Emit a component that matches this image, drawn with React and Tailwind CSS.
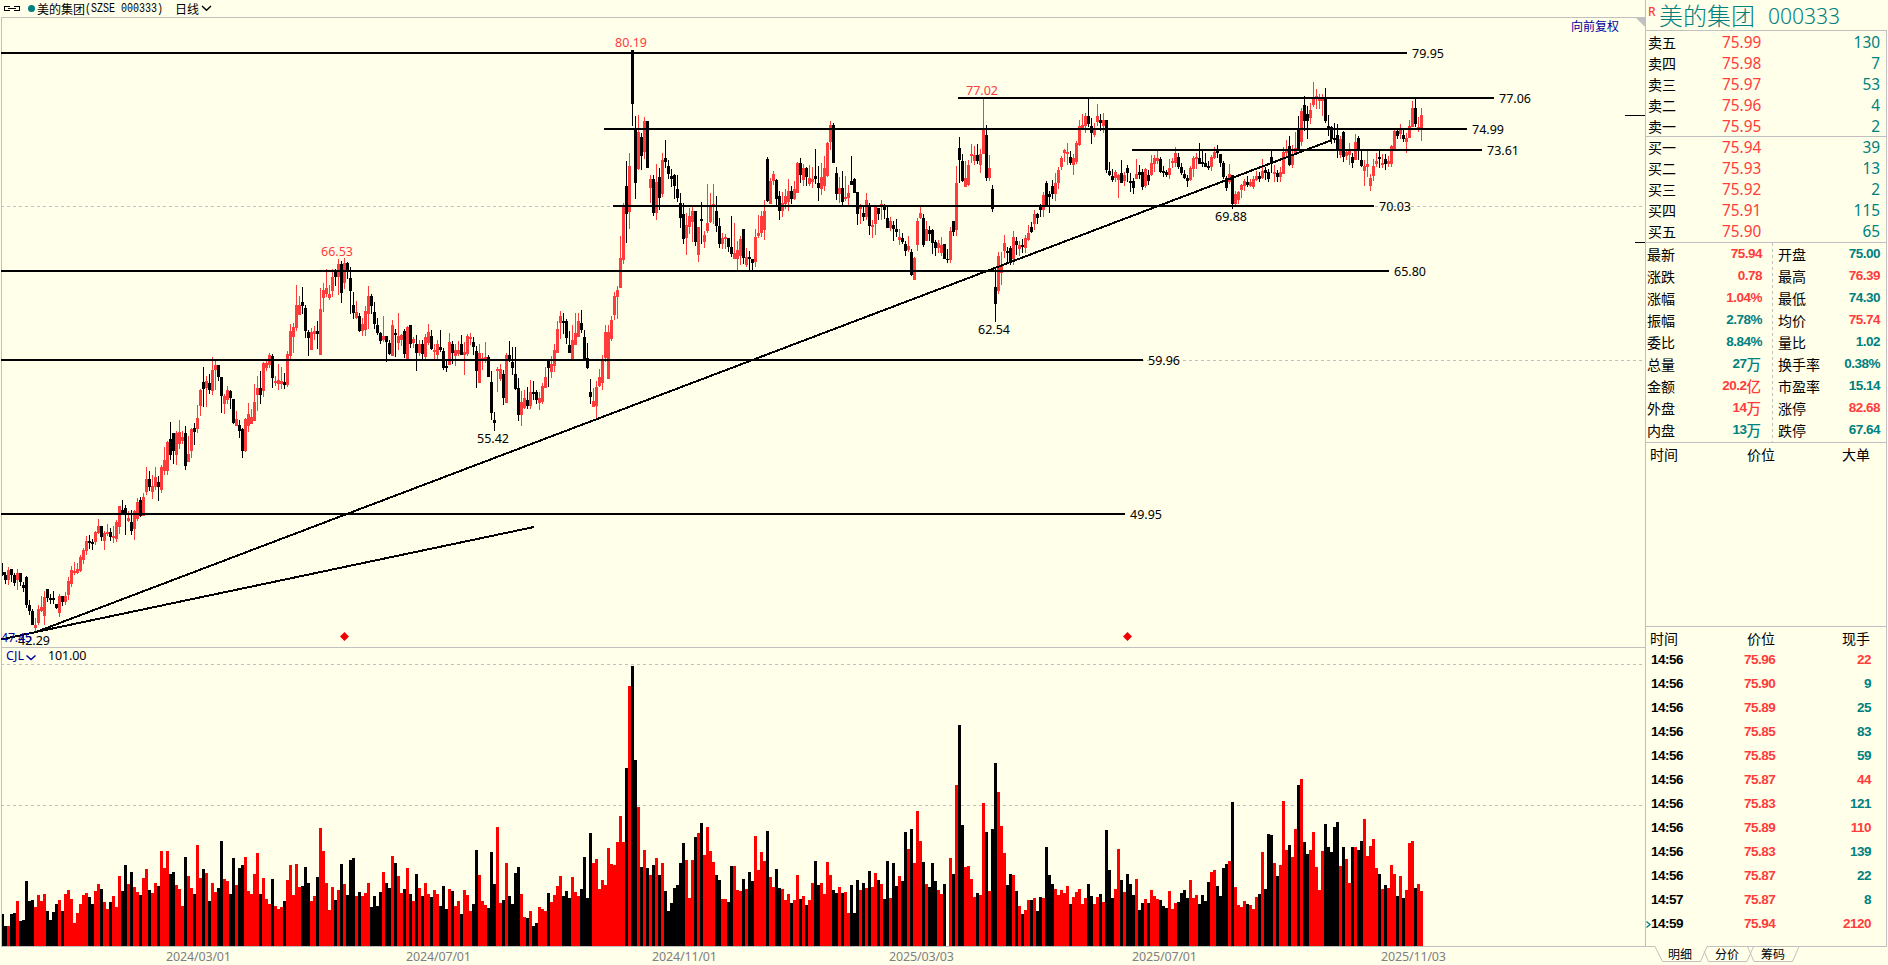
// One entry per trading day. Prices are "high bodyTop bodyBottom low" in chart
// sub-units (3 per pixel), volumes are colour + bar top in the same units.
const PRICES = `
1690 1717 1726 1728|1717 1726 1740 1752|1701 1710 1739 1755|1707 1707 1726 1745|1720 1725 1748 1757|1707 1719 1740 1770|1719 1719 1746 1758|1746 1755 1764 1776
1728 1731 1815 1824|1800 1815 1833 1845|1827 1833 1875 1875|1854 1875 1884 1896|1815 1827 1869 1875|1788 1821 1833 1836|1773 1791 1847 1875|1768 1768 1794 1806
1782 1794 1800 1812|1773 1795 1800 1812|1812 1812 1824 1827|1782 1788 1839 1850|1789 1789 1806 1818|1776 1788 1806 1815|1731 1743 1785 1800|1698 1710 1752 1761
1686 1713 1719 1725|1689 1707 1719 1722|1665 1671 1713 1716|1644 1650 1680 1692|1608 1623 1653 1665|1605 1623 1628 1647|1617 1627 1633 1650|1593 1596 1627 1635
1557 1578 1599 1602|1578 1578 1611 1623|1593 1599 1623 1650|1572 1596 1602 1608|1584 1596 1611 1623|1578 1608 1615 1629|1560 1566 1617 1626|1518 1518 1581 1602
1500 1530 1540 1545|1515 1524 1540 1605|1533 1554 1563 1566|1530 1566 1593 1605|1530 1533 1587 1620|1494 1506 1557 1563|1491 1500 1548 1551|1479 1491 1548 1548
1401 1437 1476 1485|1413 1437 1461 1473|1425 1458 1476 1497|1401 1431 1461 1470|1428 1446 1461 1503|1395 1401 1470 1479|1341 1380 1413 1425|1323 1326 1413 1425
1266 1317 1365 1380|1299 1299 1353 1392|1293 1299 1365 1395|1260 1296 1332 1347|1293 1311 1323 1332|1278 1299 1398 1410|1308 1362 1386 1386|1284 1287 1353 1374
1269 1284 1296 1335|1215 1254 1287 1299|1167 1170 1218 1248|1101 1146 1167 1221|1128 1143 1164 1221|1122 1149 1170 1182|1071 1110 1173 1185|1080 1095 1110 1170
1095 1095 1131 1143|1131 1131 1188 1239|1182 1188 1212 1242|1158 1170 1200 1212|1170 1173 1194 1227|1197 1197 1269 1272|1233 1257 1278 1278|1260 1275 1293 1314
1284 1287 1353 1374|1254 1257 1353 1356|1209 1242 1278 1296|1227 1251 1272 1272|1152 1206 1263 1263|1128 1164 1185 1233|1113 1164 1185 1212|1086 1089 1173 1191
1083 1089 1104 1113|1059 1065 1095 1104|1062 1068 1134 1164|1128 1143 1149 1158|1092 1140 1152 1170|1101 1143 1152 1167|1119 1146 1155 1167|1053 1062 1155 1161
972 993 1068 1077|969 981 1011 1059|855 915 984 993|888 915 945 945|861 906 918 942|915 924 993 1014|990 996 1014 1068|984 996 1050 1050
978 993 1002 1020|963 993 1002 1047|864 927 1064 1064|849 870 894 936|807 864 882 891|855 882 894 900|807 831 873 891|807 813 831 858
777 792 831 885|783 792 879 909|774 789 849 867|786 789 810 837|801 834 873 942|876 915 939 957|903 936 954 957|939 948 993 996
954 972 993 1008|918 933 990 1008|858 888 942 987|882 888 918 942|906 936 972 987|954 975 999 1005|996 999 1023 1032|948 1008 1020 1026
1008 1008 1026 1086|1020 1029 1062 1065|960 975 1068 1068|987 999 1005 1071|939 1008 1029 1050|1002 1005 1020 1038|987 993 1062 1074|978 981 1077 1077
975 975 1032 1044|1011 1017 1029 1044|1005 1032 1059 1113|1020 1032 1059 1068|1020 1032 1062 1077|1002 1011 1071 1080|972 996 1029 1035|990 1008 1047 1050
1032 1050 1056 1077|1020 1032 1065 1077|990 1041 1050 1056|1044 1053 1104 1110|1080 1098 1104 1116|999 1026 1095 1095|1023 1032 1059 1092|1032 1050 1068 1098
1023 1050 1062 1068|1005 1032 1065 1065|1026 1056 1065 1125|1002 1008 1062 1068|999 1011 1017 1035|1011 1026 1041 1065|1038 1053 1113 1164|1032 1059 1149 1149
1059 1074 1083 1110|1026 1071 1080 1089|1065 1071 1131 1131|1113 1146 1239 1260|1236 1260 1269 1293|1101 1107 1113 1176|1092 1107 1137 1143|1110 1122 1194 1215
1059 1065 1209 1209|1023 1065 1083 1086|1041 1086 1104 1125|1041 1122 1167 1170|1134 1164 1245 1263|1173 1206 1245 1278|1170 1194 1224 1227|1161 1200 1218 1227
1140 1176 1218 1227|1143 1176 1182 1200|1170 1176 1200 1212|1176 1194 1209 1230|1149 1158 1206 1212|1101 1131 1164 1164|1080 1080 1104 1161|1068 1092 1116 1134
1032 1050 1098 1116|963 987 1059 1059|933 948 969 1017|939 963 969 1002|957 963 1014 1032|993 1035 1059 1059|975 1020 1080 1083|939 999 1035 1035
939 963 1011 1011|930 969 990 999|990 1011 1080 1080|1029 1074 1104 1107|1137 1176 1191 1212|1164 1203 1221 1221|1143 1161 1218 1254|1107 1131 1158 1161
1065 1080 1149 1170|975 996 1074 1086|975 996 1137 1137|948 960 1017 1023|876 888 945 960|858 870 891 957|708 774 864 864|609 621 780 792
483 558 642 729|459 498 636 687|150 150 312 378|348 387 549 597|345 396 507 510|399 411 468 510|351 363 456 477|363 363 504 504
525 537 564 609|525 537 639 648|492 546 639 660|504 531 594 630|459 480 582 591|420 474 486 504|480 498 522 537|507 528 537 561
522 525 558 597|525 567 594 606|579 609 654 684|609 642 717 732|639 675 714 765|624 648 681 702|618 633 666 726|633 633 726 738
681 681 765 786|606 657 663 732|693 705 726 744|552 669 693 699|579 618 666 669|552 612 618 672|588 633 678 696|654 678 732 744
699 714 732 747|702 711 717 747|714 714 741 756|648 741 762 771|669 759 777 777|723 750 777 810|708 717 768 795|687 687 774 792
744 771 795 801|753 771 777 810|777 777 789 810|687 711 786 801|645 699 708 714|633 648 699 711|600 633 690 720|471 477 603 606
534 543 612 612|513 522 543 555|537 540 597 615|573 588 633 660|576 609 633 651|567 588 612 627|537 573 606 633|558 573 597 612
543 567 597 600|486 489 579 579|474 489 525 549|492 504 540 558|501 504 531 558|495 534 552 558|501 537 546 564|447 528 537 552
498 549 564 603|489 531 567 585|468 504 558 573|426 429 528 531|363 375 426 450|369 375 489 489|501 519 582 600|531 564 582 609
513 564 606 615|528 591 597 603|555 579 594 615|468 543 555 555|534 537 579 579|576 576 642 675|612 621 627 672|615 639 651 663
579 600 651 660|609 618 678 705|660 675 681 714|618 621 672 705|624 624 642 660|600 612 621 660|612 615 630 657|618 654 684 684
651 663 684 693|663 675 687 723|657 687 696 711|687 711 720 735|699 714 726 732|723 732 753 768|708 738 750 756|747 756 825 828
771 774 840 840|654 663 735 753|621 639 654 657|642 654 735 741|663 687 723 723|678 690 702 723|687 690 729 762|720 726 744 768
720 729 744 759|711 735 759 768|732 732 777 777|747 777 780 789|681 693 780 789|663 663 696 708|498 549 690 708|411 444 480 549
462 483 543 546|483 534 561 561|480 495 555 558|432 462 468 489|438 465 483 495|432 465 483 492|447 462 495 519|297 387 462 462
375 405 534 543|465 504 534 543|555 567 627 636|804 861 912 966|756 768 873 882|756 798 819 855|705 729 753 774|741 753 759 792
738 744 789 795|693 711 777 795|711 723 735 765|723 735 747 768|717 735 741 759|705 714 744 759|675 699 720 723|666 681 696 699
630 642 672 690|639 642 654 672|612 618 630 651|576 585 630 651|543 549 618 618|573 582 591 639|540 558 582 597|519 549 582 603
501 510 549 567|468 474 501 510|447 450 459 486|429 456 462 495|453 471 489 495|462 474 495 525|423 429 486 492|360 378 435 438
342 375 387 390|339 348 378 399|297 348 372 381|354 378 399 432|369 390 405 411|312 348 366 378|342 360 369 393|339 360 378 399
360 360 510 519|486 513 525 528|507 528 540 546|510 516 534 546|522 525 540 594|480 519 549 549|516 525 543 558|495 504 519 546
519 543 549 576|534 543 564 582|477 522 537 537|495 516 525 537|507 516 561 570|504 507 558 564|510 525 543 555|465 489 525 528
465 474 492 516|450 474 483 492|471 477 516 519|498 513 519 531|510 516 525 531|477 504 525 537|474 483 489 504|441 459 489 501
459 471 501 507|489 501 519 525|510 522 534 537|525 534 543 561|498 504 540 543|468 474 507 531|459 471 477 507|429 474 492 492
453 486 492 501|459 489 501 501|483 498 504 510|465 471 501 513|441 456 474 477|435 450 459 474|462 462 489 501|483 489 531 537
528 534 564 573|492 522 546 552|525 525 612 627|573 582 612 618|573 576 600 612|552 555 570 594|537 543 558 573|528 546 555 561
537 546 558 561|528 537 561 567|513 528 540 543|516 528 537 546|477 513 534 537|501 510 519 540|507 516 537 546|447 471 489 519
495 516 522 546|510 519 531 546|501 516 531 546|441 456 522 522|420 447 459 468|408 438 495 498|435 462 495 504|396 444 459 465
348 387 447 453|324 333 426 438|288 315 363 393|318 342 363 417|309 330 354 372|246 297 315 321|267 288 297 327|282 294 303 327
282 297 303 348|264 294 363 369|345 378 390 408|378 381 417 432|369 414 420 429|372 405 450 474|408 417 465 474|393 396 471 486
447 456 468 480|429 447 465 495|459 471 489 504|402 426 480 480|408 414 453 480|450 480 498 501|480 498 513 558|450 492 501 531
522 534 558 573|477 498 528 543|459 483 492 501|453 471 477 504|462 489 495 504|462 477 492 510|468 483 492 501|435 438 492 501
390 393 447 450|387 393 408 417|372 390 402 417|390 405 417 426|399 414 426 459|360 378 414 414|303 324 381 381|297 324 372 381
351 381 390 396|324 345 384 423
`.trim().split(/[|\n]/).map((row) => row.split(' ').map((v) => Math.round(v / 3)));

const VOLUMES = `
k822 k858 r858 k822 k819 r783 k843 k840 k723 k783 k780 r801 r765 r783 r762 k813 k840 k816 k792 r780
k813 r762 r750 r777 r849 r819 r792 r765 r759 k771 k792 r753 r732 k747 r786 r807 k786 r768 r801 r708
k753 k675 r732 k696 r741 r756 k765 r714 r687 k750 r759 r729 k738 r633 r684 r633 k702 k696 r735 r747
r798 k651 r708 r744 k762 r615 r714 k687 r699 k783 r729 r756 k744 k603 r717 r723 k762 k654 r735 k684
k675 r651 r753 r762 r702 r639 k762 r714 r777 r792 k717 r798 r807 r801 k783 r720 r675 r765 r672 r741
k738 k681 k729 r783 r768 k711 r564 r633 r729 r810 r741 k780 r750 k672 r732 k765 k660 k654 r768 k756
r768 r759 r729 k801 k768 k798 k756 r696 k729 k744 r648 k669 r708 r759 k747 r684 k762 r783 k702 r744
k768 r729 r762 k771 r750 r762 k798 k738 k807 r747 k753 r798 r783 k822 r750 r765 r813 k792 k630 r705
r783 r795 k804 k636 k732 r561 r789 k780 r669 k768 k792 k699 k681 r762 r831 k834 r813 k858 k849 r801
r807 r813 k759 r786 r765 r738 r708 k768 k753 k774 r711 r756 r768 k747 k651 k774 k579 r669 r657 r747
r720 r735 r624 r672 r675 r606 r528 r606 k384 r138 k78 k360 r501 k681 r630 k684 r705 k675 r654 k705
r669 k753 k813 k789 k744 k735 k669 k609 r660 r774 r660 k591 r579 k549 r645 r561 r633 r666 k705 k720
r777 r777 k786 k678 r678 r750 r753 k717 r747 k696 k723 r588 r690 r636 r663 k573 r711 r741 k687 k744
r747 r780 r762 k789 r780 r705 k777 r768 k795 r780 r729 k663 k735 r729 r762 r666 r705 k750 k759 r741
k759 r756 r819 k735 k819 k720 r750 k729 r744 k693 r741 r699 k720 r732 k777 k663 r774 k669 k738 r708
k723 k576 r627 k567 r669 r513 r603 k666 r732 k741 k669 k723 r750 r762 k732 k918 r654 k702 r435 k255
k555 r681 r678 r717 r771 k759 r765 r489 k576 r753 k567 k369 r456 r558 r639 k735 k702 r705 k753 r798
k822 r810 r780 k780 r774 k813 k771 r774 k621 k705 k732 r747 r765 r750 r759 r738 k792 r771 r756 r747
r792 r774 k732 k768 r792 r771 k762 r786 k570 k690 k774 r747 r627 k720 r756 k702 k732 k765 r717 k810
k789 r777 k789 r750 r768 r777 k780 k798 k804 r753 r807 r789 k786 k759 k750 k774 r720 r774 r765 k792
k765 k783 k726 r696 r690 k738 k768 k684 k672 r663 k486 r741 r795 r801 r783 k792 r795 r807 r771 k762
r636 k747 k582 k585 r669 k708 r675 r483 r630 k615 r651 r567 k435 r417 k606 k642 r630 r576 r681 r750
r633 k552 k621 k636 k561 k546 r678 k621 r657 r729 k621 r621 k630 k603 r537 r648 r618 r597 r684 k702
r747 k735 r744 r675 r702 k768 r708 k774 r750 r609 r603 k744 r732 r753
`.trim().split(/\s+/).map((v) => ({ up: v[0] === 'r', y: 640 + v.slice(1) / 3 }));

const LEVELS = [
  { price: '79.95', y: 53, from: 1, to: 1407 },
  { price: '77.06', y: 98, from: 958, to: 1494 },
  { price: '74.99', y: 129, from: 604, to: 1467 },
  { price: '73.61', y: 150, from: 1132, to: 1482 },
  { price: '70.03', y: 206, from: 613, to: 1374 },
  { price: '65.80', y: 271, from: 1, to: 1389 },
  { price: '59.96', y: 360, from: 1, to: 1143 },
  { price: '49.95', y: 514, from: 1, to: 1125 },
];

const MARKS = [
  { text: '66.53', x: 321, y: 256, high: true },
  { text: '80.19', x: 615, y: 47, high: true },
  { text: '77.02', x: 966, y: 95, high: true },
  { text: '55.42', x: 477, y: 443 },
  { text: '62.54', x: 978, y: 334 },
  { text: '69.88', x: 1215, y: 221 },
  { text: '42.29', x: 18, y: 645 },
];

const DATES = [
  ['2024/03/01', 166],
  ['2024/07/01', 406],
  ['2024/11/01', 652],
  ['2025/03/03', 889],
  ['2025/07/01', 1132],
  ['2025/11/03', 1381],
];

const ASKS = [
  ['卖五', '75.99', '130'],
  ['卖四', '75.98', '7'],
  ['卖三', '75.97', '53'],
  ['卖二', '75.96', '4'],
  ['卖一', '75.95', '2'],
];

const BIDS = [
  ['买一', '75.94', '39'],
  ['买二', '75.93', '13'],
  ['买三', '75.92', '2'],
  ['买四', '75.91', '115'],
  ['买五', '75.90', '65'],
];

const UP = 'text-[#ff3c3c]';
const DOWN = 'text-[#008080]';

const STATS_LEFT = [
  ['最新', '75.94', '', UP],
  ['涨跌', '0.78', '', UP],
  ['涨幅', '1.04%', '', UP],
  ['振幅', '2.78%', '', DOWN],
  ['委比', '8.84%', '', DOWN],
  ['总量', '27', '万', DOWN],
  ['金额', '20.2', '亿', UP],
  ['外盘', '14', '万', UP],
  ['内盘', '13', '万', DOWN],
];

const STATS_RIGHT = [
  ['开盘', '75.00', '', DOWN],
  ['最高', '76.39', '', UP],
  ['最低', '74.30', '', DOWN],
  ['均价', '75.74', '', UP],
  ['量比', '1.02', '', DOWN],
  ['换手率', '0.38%', '', DOWN],
  ['市盈率', '15.14', '', DOWN],
  ['涨停', '82.68', '', UP],
  ['跌停', '67.64', '', DOWN],
];

const TICKS = [
  ['14:56', '75.96', '22', UP],
  ['14:56', '75.90', '9', DOWN],
  ['14:56', '75.89', '25', DOWN],
  ['14:56', '75.85', '83', DOWN],
  ['14:56', '75.85', '59', DOWN],
  ['14:56', '75.87', '44', UP],
  ['14:56', '75.83', '121', DOWN],
  ['14:56', '75.89', '110', UP],
  ['14:56', '75.83', '139', DOWN],
  ['14:56', '75.87', '22', DOWN],
  ['14:57', '75.87', '8', DOWN],
  ['14:59', '75.94', '2120', UP],
];

const CHART_FONT = "font-['Noto_Sans','Noto_Sans_CJK_SC',sans-serif] text-[12.5px]";
const CJK_FONT = "font-['Noto_Sans_CJK_SC',sans-serif]";
const BOLD_FONT = "font-['Liberation_Sans','Noto_Sans_CJK_SC',sans-serif] font-bold text-[13.5px] tracking-[-0.5px]";

function GridLine({ y }) {
  return <path d={`M1 ${y + 0.5}H1643`} stroke="#c0c0c0" strokeDasharray="3 3" />;
}

function ChartHeader() {
  return (
    <header className="flex h-[17px] items-center pl-1 text-black">
      <svg width="16" height="6" viewBox="0 0 16 6" fill="none" stroke="#000" shapeRendering="crispEdges">
        <path d="M6 .5H.5v4H6M10 .5h5.5v4H10M4 2.5h8" />
      </svg>
      <span className="ml-2 size-[7px] rounded-full bg-[#008080]" />
      <span className={`${CJK_FONT} ml-[2px] text-[12px] leading-[17px]`}>美的集团</span>
      <span className="inline-block origin-center scale-y-120 whitespace-pre font-['Liberation_Mono',monospace] text-[10px] leading-[17px]">
        (SZSE 000333)
      </span>
      <span className={`${CJK_FONT} ml-3 text-[12px] leading-[17px]`}>日线</span>
      <svg className="ml-[2px]" width="11" height="7" viewBox="0 0 11 7" fill="none" stroke="#000" strokeWidth="1.4">
        <path d="M1 1l4.5 4.3L10 1" />
      </svg>
    </header>
  );
}

function PriceChart() {
  return (
    <svg className={`${CHART_FONT} block`} width="1645" height="630" viewBox="0 17 1645 630">
      <path d="M1 17.5H1645M1.5 17V647" stroke="#c0c0c0" />
      <GridLine y={206} />
      <GridLine y={360} />

      <g shapeRendering="crispEdges">
        {PRICES.map(([high, top, bottom, low], i) => {
          const x = 1 + i * 3;
          return (
            <g key={i} fill={VOLUMES[i].up ? '#ff3c3c' : '#000'}>
              <rect x={x + 1} y={high} width="1" height={low - high} />
              <rect x={Math.max(x, 2)} y={top} width="3" height={Math.max(bottom - top, 1)} />
            </g>
          );
        })}
      </g>

      <g stroke="#000" strokeWidth="2" shapeRendering="crispEdges">
        {LEVELS.map(({ price, y, from, to }) => (
          <path key={price} d={`M${from} ${y}H${to}`} />
        ))}
        <path d="M36 632L1332 140" />
        <path d="M1 639.5L36 632L534 527" fill="none" />
      </g>

      {LEVELS.map(({ price, y, to }) => (
        <text key={price} x={to + 5} y={y + 5} textLength="32">{price}</text>
      ))}
      {MARKS.map(({ text, x, y, high }) => (
        <text key={text} x={x} y={y} textLength="32" fill={high ? '#ff3c3c' : '#000'}>{text}</text>
      ))}
      <text x="1" y="642" textLength="31" fill="#0000a0">47.45</text>

      <path d="M344.5 632l4.5 4.5-4.5 4.5-4.5-4.5zM1127.5 632l4.5 4.5-4.5 4.5-4.5-4.5z" fill="#f00000" />
      <path d="M1636 18h9v9z" fill="#c0c0c0" />
      <path d="M1625 115.5h20M1635 242.5h10" stroke="#000" />
      <text x="1571" y="30.5" fill="#0000a0" className={`${CJK_FONT} text-[12px]`}>向前复权</text>
    </svg>
  );
}

function VolumeChart() {
  return (
    <svg className={`${CHART_FONT} block`} width="1645" height="318" viewBox="0 647 1645 318">
      <path d="M1 647.5H1645M1.5 647V947M1 946.5H1645" stroke="#c0c0c0" />
      <GridLine y={664} />
      <GridLine y={805} />
      <text x="6" y="660" textLength="18" fill="#0000a0">CJL</text>
      <path d="M26.5 655.5l4.5 4 4.5-4" fill="none" stroke="#0000a0" strokeWidth="1.5" />
      <text x="48" y="660" textLength="38.5">101.00</text>
      <g shapeRendering="crispEdges">
        {VOLUMES.map(({ up, y }, i) => {
          const x = Math.max(1 + i * 3, 2);
          return <rect key={i} x={x} y={y} width={4 + i * 3 - x} height={946 - y} fill={up ? '#f00' : '#000'} />;
        })}
      </g>
      {DATES.map(([date, x]) => (
        <text key={date} x={x} y="960.5" textLength="65" fill="#808080">{date}</text>
      ))}
    </svg>
  );
}

function QuoteRows({ rows }) {
  return rows.map(([label, price, size]) => (
    <div key={label} className="flex h-[21px] items-center">
      <span className={`${CJK_FONT} w-[74px] text-[14px]`}>{label}</span>
      <span className={UP}>{price}</span>
      <span className={`${DOWN} ml-auto`}>{size}</span>
    </div>
  ));
}

function StatColumn({ rows, className }) {
  return (
    <div className={className}>
      {rows.map(([label, value, unit, color]) => (
        <div key={label} className="flex h-[22px] items-center justify-between">
          <span className={`${CJK_FONT} text-[14px]`}>{label}</span>
          <span className={`${BOLD_FONT} ${color} flex items-center`}>
            {value}
            {unit && <span className={`${CJK_FONT} mr-[1px] font-medium text-[14.5px] tracking-normal`}>{unit}</span>}
          </span>
        </div>
      ))}
    </div>
  );
}

function ListHeader({ columns }) {
  return (
    <div className={`${CJK_FONT} flex h-[22px] items-center pl-[4px] pr-[16px] text-[14px]`}>
      <span className="w-[97px]">{columns[0]}</span>
      <span>{columns[1]}</span>
      <span className="ml-auto">{columns[2]}</span>
    </div>
  );
}

function TickList() {
  return (
    <div className={BOLD_FONT}>
      {TICKS.map(([time, price, size, color], i) => (
        <div key={i} className="flex h-6 items-center pr-[15px]">
          <span className="flex w-[5px] items-center">
            {i === TICKS.length - 1 && (
              <svg width="5" height="7" viewBox="0 0 5 7" fill="none" stroke="#008080" strokeWidth="1.3">
                <path d="M.5.5L4 3.5.5 6.5" />
              </svg>
            )}
          </span>
          <span className="w-[93px]">{time}</span>
          <span className={UP}>{price}</span>
          <span className={`${color} ml-auto`}>{size}</span>
        </div>
      ))}
    </div>
  );
}

function PanelTabs() {
  return (
    <svg className={`${CJK_FONT} block text-[12px]`} width="243" height="19" viewBox="1645 946 243 19">
      <g fill="none" stroke="#c0c0c0">
        <path d="M1645 946.5h10l7.5 15h38l6.5-15h180" />
        <path d="M1704 951l4.5 10.5h38.5l6.5-15M1747.5 946.5l6.5 15h38.5l6.5-15" />
      </g>
      <text x="1668" y="958.5">明细</text>
      <text x="1715" y="958.5">分价</text>
      <text x="1761" y="958.5">筹码</text>
    </svg>
  );
}

function QuotePanel() {
  return (
    <aside className="flex w-[243px] flex-col">
      <div className="flex h-[30px] border-l border-[#c0c0c0] pl-[2px]">
        <span className={`${UP} w-[11px] pt-[4px] font-['Noto_Sans',sans-serif] text-[12px] font-medium leading-[15px]`}>R</span>
        <span className={`${CJK_FONT} ${DOWN} text-[24px] font-light leading-[30px]`}>美的集团</span>
        <span className={`${DOWN} ml-[13px] font-['Noto_Sans',sans-serif] text-[21px] font-light leading-[32px]`}>000333</span>
      </div>

      <div className="flex h-[916px] w-[242px] flex-col border-x border-t border-[#c0c0c0]">
        <div className="font-['Noto_Sans',sans-serif] text-[15.4px] leading-[21px]">
          <div className="h-[106px] pl-[2px] pr-[6px] pt-[1px]"><QuoteRows rows={ASKS} /></div>
          <div className="-mt-px h-[106px] border-t border-[#c0c0c0] pl-[2px] pr-[6px]"><QuoteRows rows={BIDS} /></div>
        </div>

        <div className="flex h-[200px] border-t border-[#c0c0c0]">
          <StatColumn rows={STATS_LEFT} className="w-[116px] pl-[1px]" />
          <svg className="ml-[10px]" width="1" height="199" viewBox="0 0 1 199">
            <path d="M.5 0V199" stroke="#c0c0c0" strokeDasharray="3 3" />
          </svg>
          <StatColumn rows={STATS_RIGHT} className="ml-[5px] w-[102px]" />
        </div>

        <div className="h-[184px] border-t border-[#c0c0c0]">
          <ListHeader columns={['时间', '价位', '大单']} />
        </div>

        <div className="border-t border-[#c0c0c0]">
          <ListHeader columns={['时间', '价位', '现手']} />
          <div className="-mt-px">
            <TickList />
          </div>
        </div>
      </div>
      <PanelTabs />
    </aside>
  );
}

export default function App() {
  return (
    <div className="flex h-[965px] w-[1888px] overflow-hidden bg-[#ffffea] text-black">
      <main className="w-[1645px]">
        <ChartHeader />
        <PriceChart />
        <VolumeChart />
      </main>
      <QuotePanel />
    </div>
  );
}
